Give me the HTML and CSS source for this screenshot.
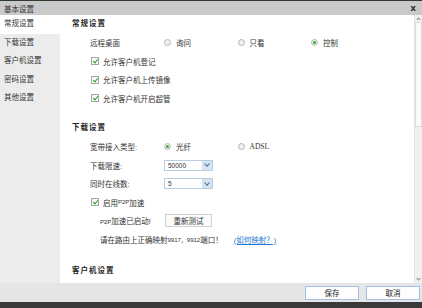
FILE: index.html
```html
<!DOCTYPE html>
<html lang="zh-CN">
<head>
  <meta charset="UTF-8">
  <meta name="viewport" content="width=device-width, initial-scale=1.0">
  <title>基本设置</title>
  <link rel="stylesheet" href="styles.css">
</head>
<body>
  <div class="dialog">
    <div class="topstrip"></div>
    <div class="titlebar">
      <span>基本设置</span>
      <span class="close">x</span>
    </div>

    <div class="main">
      <ul class="sidebar">
        <li class="active">常规设置</li>
        <li>下载设置</li>
        <li>客户机设置</li>
        <li>密码设置</li>
        <li>其他设置</li>
      </ul>

      <div class="content">
        <h2>常规设置</h2>
        <div class="row">
          <span class="label">远程桌面</span>
          <span class="opt"><i class="radio"></i>询问</span>
          <span class="opt"><i class="radio"></i>只看</span>
          <span class="opt"><i class="radio on"></i>控制</span>
        </div>
        <div class="row check-row"><i class="check"></i>允许客户机登记</div>
        <div class="row check-row"><i class="check"></i>允许客户机上传镜像</div>
        <div class="row check-row"><i class="check"></i>允许客户机开启超管</div>

        <h2 class="section">下载设置</h2>
        <div class="row">
          <span class="label">宽带接入类型:</span>
          <span class="opt"><i class="radio on"></i>光纤</span>
          <span class="opt">
            <i class="radio"></i><span class="latin">ADSL</span>
          </span>
        </div>
        <div class="row">
          <span class="label">下载限速:</span>
          <span class="select"><span class="value">50000</span><span class="arrow"></span></span>
        </div>
        <div class="row">
          <span class="label">同时在线数:</span>
          <span class="select"><span class="value">5</span><span class="arrow"></span></span>
        </div>
        <div class="row check-row"><i class="check"></i>启用<span class="small">P2P</span>加速</div>
        <div class="row sub-row">
          <span class="status"><span class="small">P2P</span>加速已启动!</span>
          <button class="test-btn">重新测试</button>
        </div>
        <div class="row sub-row">
          请在路由上正确映射<span class="small">9917，9912</span>端口！
          <a href="#" class="help">(如何映射？)</a>
        </div>

        <h2 class="section last">客户机设置</h2>
      </div>

      <div class="scrollbar">
        <span class="sb-btn up"></span>
        <span class="sb-thumb"></span>
        <span class="sb-track"></span>
        <span class="sb-btn down"></span>
      </div>
    </div>

    <div class="footer">
      <button class="btn">保存</button>
      <button class="btn">取消</button>
    </div>
    <div class="bottomstrip"></div>
  </div>
</body>
</html>
```

FILE: styles.css
```css
* {
  box-sizing: border-box;
}
body {
  margin: 0;
  padding: 0;
  width: 422px;
  height: 308px;
  overflow: hidden;
  font-family: "Liberation Sans", "Noto Sans CJK SC", sans-serif;
  font-size: 7.5px;
  color: #333;
  background: #fff;
}
.dialog {
  display: flex;
  flex-direction: column;
  height: 308px;
}
.topstrip {
  height: 1px;
  background: #2d3a2d;
}
.titlebar {
  height: 14px;
  display: flex;
  justify-content: space-between;
  align-items: center;
  padding: 0 6px 0 4px;
  background: #c9c9c9;
  color: #333;
}
.close {
  font-family: "DejaVu Sans", sans-serif;
  font-weight: bold;
  font-size: 9px;
  color: #333;
}
.main {
  display: flex;
  height: 268px;
}
.sidebar {
  list-style: none;
  margin: 0;
  padding: 0;
  width: 60px;
  background: #ececec;
}
.sidebar li {
  height: 18.5px;
  line-height: 18.5px;
  padding-left: 4px;
}
.sidebar li.active {
  background: #fff;
}
.content {
  flex: 1;
  padding-left: 12px;
  background: #fff;
  overflow: hidden;
}
h2 {
  margin: 0;
  height: 18.5px;
  line-height: 18.5px;
  font-size: 7.5px;
  font-weight: bold;
  letter-spacing: 1px;
  color: #222;
}
h2.section {
  margin-top: 11.5px;
}
h2.last {
  margin-top: 13px;
}
.row {
  display: flex;
  align-items: center;
  height: 18.5px;
  padding-left: 18px;
}
.label {
  width: 74px;
}
.opt {
  display: flex;
  align-items: center;
  width: 73.5px;
}
.latin {
  font-family: "Liberation Serif", serif;
  font-size: 7.5px;
}
.small {
  font-size: 6px;
}
.radio {
  width: 7px;
  height: 7px;
  margin-right: 5px;
  border: 1px solid #b4b4b4;
  border-radius: 50%;
  background: #f1f1f1;
  display: flex;
  align-items: center;
  justify-content: center;
}
.radio.on::after {
  content: "";
  width: 3px;
  height: 3px;
  border-radius: 50%;
  background: #2fae2f;
}
.check-row {
  padding-left: 19px;
}
.check {
  width: 8px;
  height: 8px;
  margin-right: 4px;
  border: 1px solid #a7a7a7;
  background: #fafafa;
  position: relative;
}
.check::after {
  content: "";
  position: absolute;
  left: 1.5px;
  top: 0;
  width: 2px;
  height: 4px;
  border: solid #27a227;
  border-width: 0 1.5px 1.5px 0;
  transform: rotate(40deg);
}
.select {
  display: flex;
  width: 49px;
  height: 11px;
  border: 1px solid #b9cde2;
  background: #fff;
}
.select .value {
  flex: 1;
  padding-left: 3px;
  line-height: 9px;
  font-size: 6.5px;
}
.select .arrow {
  width: 10px;
  background: #d6e3f1;
  display: flex;
  align-items: center;
  justify-content: center;
}
.select .arrow::after {
  content: "";
  width: 3px;
  height: 3px;
  border: solid #4d6f96;
  border-width: 0 1px 1px 0;
  transform: translateY(-1px) rotate(45deg);
}
.sub-row {
  padding-left: 28px;
}
.status {
  width: 65px;
}
.test-btn {
  width: 47px;
  height: 13px;
  padding: 0;
  font: inherit;
  color: #333;
  background: #fbfbfb;
  border: 1px solid #d0d0d0;
}
.help {
  margin-left: 11px;
  color: #2276d2;
}
.scrollbar {
  width: 8px;
  display: flex;
  flex-direction: column;
  background: #f0f0f0;
  border-left: 1px solid #e4e4e4;
}
.sb-btn {
  height: 7px;
  display: flex;
  align-items: center;
  justify-content: center;
}
.sb-btn::after {
  content: "";
  width: 2px;
  height: 2px;
  border: solid #8a8a8a;
  border-width: 1px 0 0 1px;
}
.sb-btn.up::after {
  transform: translateY(1px) rotate(45deg);
}
.sb-btn.down::after {
  transform: translateY(-1px) rotate(225deg);
}
.sb-thumb {
  height: 105px;
  background: #fbfbfb;
  border: 1px solid #dcdcdc;
}
.sb-track {
  flex: 1;
}
.footer {
  height: 19px;
  display: flex;
  justify-content: flex-end;
  align-items: center;
  gap: 7px;
  padding-right: 2px;
  background: #e6e6e6;
}
.btn {
  width: 54px;
  height: 14px;
  padding: 0;
  font: inherit;
  color: #222;
  background: #fdfdfd;
  border: 1px solid #9ec3e6;
}
.bottomstrip {
  flex: 1;
  background: #3a3a3a;
}
```
